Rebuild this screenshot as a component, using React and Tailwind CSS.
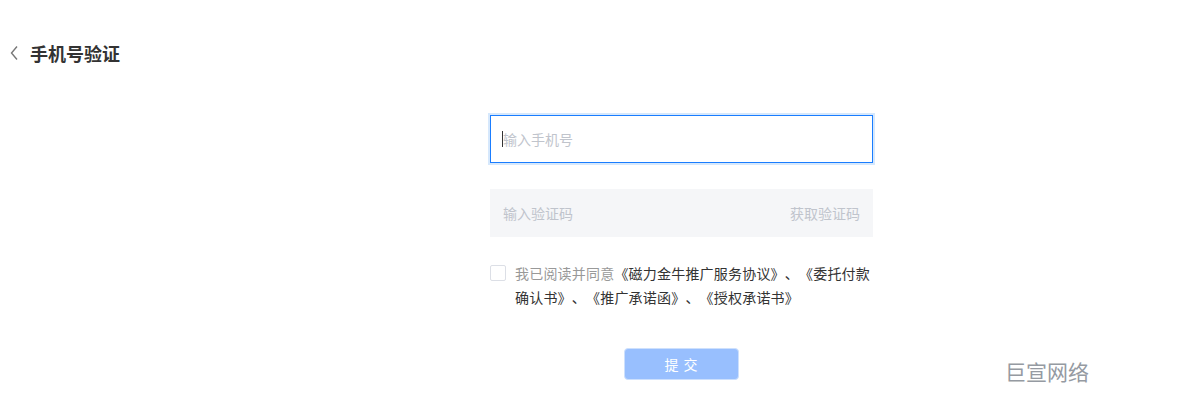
import React from 'react';

const font = { fontFamily: '"Noto Sans CJK SC", "Noto Sans", sans-serif' };

export default function App() {
    return (
        <div className="relative w-[1197px] h-[402px] bg-white overflow-hidden" style={font}>
            <div className="flex items-center h-[26px] mt-[40px] pl-[9px]">
                <svg width="12" height="16" viewBox="0 0 12 16" className="mr-[9px]">
                    <path d="M8 1.5 L2.5 8 L8 14.5" fill="none" stroke="#777" strokeWidth="1.4" />
                </svg>
                <h1 className="text-[18px] font-bold text-[#333] leading-[26px]">手机号验证</h1>
            </div>

            <div className="ml-[490px] w-[383px] mt-[49px]">
                <div className="h-[48px] border border-[#1a7dff] ring-2 ring-[#d6e8fc] flex items-center px-[11px]">
                    <span className="w-px h-[16px] bg-[#333]" />
                    <span className="text-[14px] text-[#c0c4cc]">输入手机号</span>
                </div>

                <div className="mt-[26px] h-[48px] bg-[#f5f6f8] flex items-center justify-between px-[13px] text-[14px] text-[#c0c4cc]">
                    <span>输入验证码</span>
                    <span>获取验证码</span>
                </div>

                <div className="mt-[24px] flex items-start">
                    <span className="mt-[4px] w-[16px] h-[16px] shrink-0 border border-[#dcdfe6] rounded-[2px] bg-white" />
                    <p className="ml-[9px] text-[14px] leading-[24px] text-[#333] tracking-[0.2px] [text-spacing-trim:space-all]">
                        <span className="text-[#999]">我已阅读并同意</span>《磁力金牛推广服务协议》、《委托付款<br />确认书》、《推广承诺函》、《授权承诺书》
                    </p>
                </div>

                <div className="mt-[39px] flex justify-center">
                    <button className="w-[115px] h-[32px] rounded-[4px] bg-[#98bffe] border border-[#cde0fd] text-white text-[14px] tracking-[1px]">
                        提 交
                    </button>
                </div>
            </div>

            <div className="absolute left-[1005px] top-[357px] text-[21px] leading-[28px] text-[#959aa2]">巨宣网络</div>
        </div>
    );
}
